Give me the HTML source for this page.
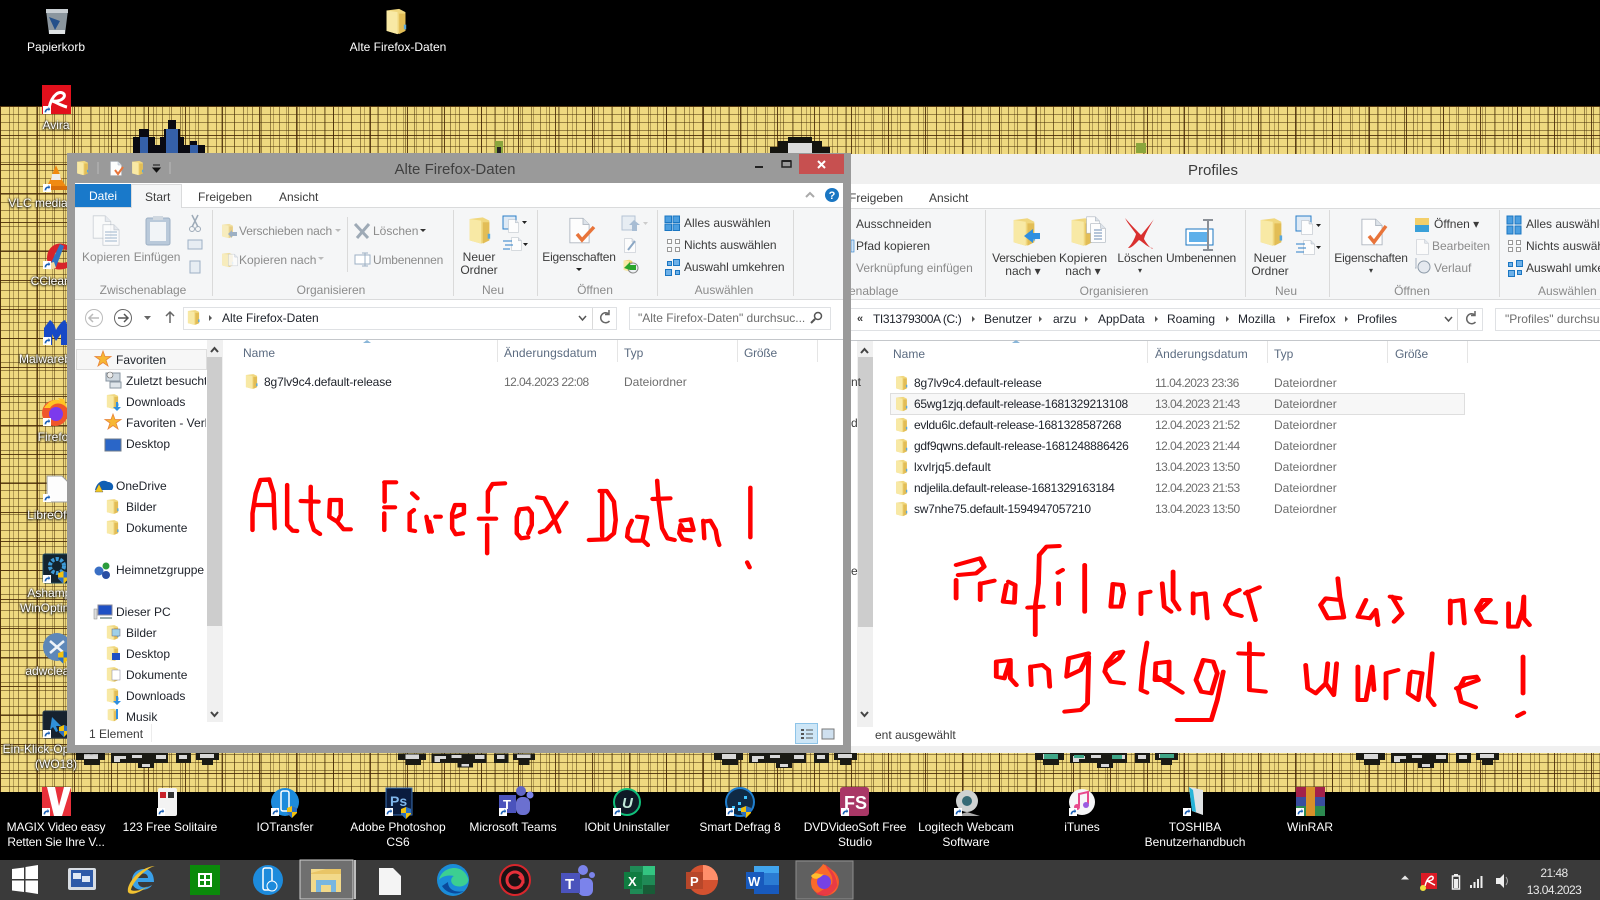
<!DOCTYPE html>
<html lang="de"><head><meta charset="utf-8"><title>Desktop</title>
<style>
html,body{margin:0;padding:0;background:#000}
#p{position:relative;width:1600px;height:900px;overflow:hidden;background:#000;font-family:"Liberation Sans",sans-serif;font-size:12px;color:#3b3b3b}
.a{position:absolute}
.t{position:absolute;white-space:nowrap;line-height:16px}
.c{transform:translateX(-50%)}
.w{color:#fff;text-shadow:0 1px 2px #000,0 0 2px #000}
.g{color:#8b8b8b}
.n{color:#20242c}
.h{color:#5b6b80}
.d{color:#6d6d6d}
.dg{letter-spacing:-.55px}
.fn{letter-spacing:-.27px}
.sn{letter-spacing:-.13px}
svg{position:absolute;left:0;top:0;overflow:visible}
#wall{left:0;top:106px;width:1600px;height:686px;background-color:#efd980;
background-image:linear-gradient(90deg,rgba(70,40,5,.85) 1px,transparent 1px),linear-gradient(rgba(70,40,5,.85) 1px,transparent 1px),linear-gradient(90deg,rgba(70,45,5,.5) 1px,transparent 1px),linear-gradient(rgba(70,45,5,.5) 1px,transparent 1px),linear-gradient(90deg,rgba(70,45,5,.35) 1px,transparent 1px);
background-size:37px 100%,100% 29px,9px 100%,100% 8px,13px 100%}
.ln{position:absolute;background:#dadada;width:1px}
.bd{position:absolute;box-sizing:border-box;border:2px solid #dfe1e4;background:#fff}
</style></head><body><div id="p">

<div class="a" id="wall"></div>

<svg width="1600" height="900" style="display:block">
<defs>
<symbol id="fold" viewBox="0 0 14 18"><path d="M1 2 9 1 13 3V15L8 17 1 15Z" fill="#f0d77e"/><path d="M1 2 8 3V17L1 15Z" fill="#f8e9a5"/><path d="M9 4 13 4V15L9 17Z" fill="#e2bd56"/><path d="M12 11h1.500v3H12z" fill="#5aa8dc"/></symbol>
<symbol id="page" viewBox="0 0 24 30"><path d="M1 1H16L23 8V29H1Z" fill="#fdfdfd" stroke="#aeb6c0"/><path d="M16 1V8H23" fill="#dde3ea" stroke="#aeb6c0"/></symbol>
<symbol id="spr" viewBox="0 0 148 15" shape-rendering="crispEdges">
<path d="M0 0H29V7H24V12H8V7H0ZM35 0H92V10H78V15H62V10H35ZM100 0H115V10H100ZM120 0H143V7H137V12H126V7H120Z" fill="#1a1a14"/>
<path d="M8 1H22V6H8ZM38 3H50V6H44V9H38ZM66 11H74V14H66ZM56 2H66V5H56ZM80 2H90V6H80ZM124 1H138V5H124ZM103 2H111V6H103Z" fill="#d8d8d8"/>
</symbol>
<symbol id="shield" viewBox="0 0 10 12"><path d="M5 0 10 2V7L5 12 0 7V2Z" fill="#f2c20f"/><path d="M5 0 10 2V6H5ZM0 6H5V12L0 7Z" fill="#2a6fc4"/></symbol>
<symbol id="arr" viewBox="0 0 10 10"><rect width="10" height="10" fill="#fff"/><path d="M2 8C2 5 4 3 7 3V1L9 4 7 6.500V5C5 5 4 6 4 8Z" fill="#1a5fb4"/></symbol>
</defs>

<!-- top-of-wallpaper sprites -->
<g shape-rendering="crispEdges">
<path d="M133 153V137H139V129H149V137H155V145H160V137H164V129H168V120H176V129H180V137H184V145H190V141H197V145H205V153Z" fill="#0a0a12"/>
<path d="M140 153V137H148V153ZM166 153V129H178V153ZM190 153V145H198V153Z" fill="#3560a8"/>
<path d="M495 153V141H503V153Z" fill="#8aa63c"/><rect x="497" y="147" width="4" height="6" fill="#222"/>
<path d="M770 153V147H778V141H788V137H812V141H822V147H830V153Z" fill="#14140f"/><path d="M788 143H812V153H788Z" fill="#dcdcdc"/>
<path d="M1136 153V143H1146V153Z" fill="#8aa63c"/>
</g>
<!-- bottom sprites -->
<use href="#spr" x="76" y="753" width="148" height="15"/>
<use href="#spr" x="398" y="753" width="142" height="15"/>
<use href="#spr" x="714" y="753" width="148" height="15"/>
<use href="#spr" x="1035" y="753" width="148" height="15"/><path d="M1044 754H1058V759H1044ZM1074 755H1084V758H1074ZM1112 755H1122V759H1112ZM1160 754H1174V758H1160Z" fill="#3fa688"/>
<use href="#spr" x="1356" y="753" width="148" height="15"/>

<!-- desktop icons left -->
<path d="M46 10H68L65 34H49Z" fill="#8b969e"/><path d="M46 9H68V13H46Z" fill="#c8ced2"/><path d="M49 17 60 21 55 30Z" fill="#24508a"/><path d="M49 30H65V34H49Z" fill="#dfe3e5"/>
<use href="#fold" x="385" y="7" width="22" height="29"/>
<rect x="42" y="85" width="29" height="29" fill="#e2101c"/><path d="M49 108C52 94 60 90 64 94 66 98 60 102 52 101 58 103 62 106 67 107" fill="none" stroke="#fff" stroke-width="3"/><use href="#arr" x="43" y="106" width="8" height="8"/>
<path d="M56 165 62 180 67 188H46L50 180Z" fill="#f08a12"/><path d="M52 174H60L61 180H51Z" fill="#eee"/><path d="M46 186H67V190H46Z" fill="#d96f0a"/><use href="#arr" x="43" y="184" width="8" height="8"/>
<path d="M67 245C56 240 47 248 47 258 47 268 58 272 67 268V262C60 264 54 262 54 257 54 252 60 248 67 250Z" fill="#d8232a"/><path d="M50 265 60 244 64 246 56 267Z" fill="#2f72c4"/><path d="M46 264 54 262 56 268 49 270Z" fill="#f0d9a0"/><use href="#arr" x="43" y="261" width="8" height="8"/>
<path d="M44 345V328L50 320C53 322 55 326 56 330 58 326 62 321 65 320L68 326V345H61V334L56 341 52 334V345Z" fill="#1749c6"/><use href="#arr" x="43" y="337" width="8" height="8"/>
<circle cx="55" cy="413" r="13" fill="#f0562a"/><circle cx="56" cy="414" r="7" fill="#7c3aed"/><path d="M44 408C50 398 62 396 67 408 62 402 54 402 50 408Z" fill="#ffc424"/><path d="M58 398 64 399 67 408Z" fill="#ffc424"/><use href="#arr" x="43" y="418" width="8" height="8"/>
<path d="M47 476H62L68 482V502H47Z" fill="#fdfdfd" stroke="#9a9a9a"/><use href="#arr" x="43" y="494" width="8" height="8"/>
<rect x="43" y="554" width="26" height="29" rx="2" fill="#13242f" stroke="#1f4a60"/><circle cx="57" cy="566" r="7" fill="none" stroke="#3d9ad6" stroke-width="4" stroke-dasharray="3 1.500"/><use href="#shield" x="58" y="571" width="11" height="13"/><use href="#arr" x="43" y="575" width="8" height="8"/>
<circle cx="57" cy="647" r="14" fill="#5d87b8"/><path d="M50 641 64 653M64 641 50 653" stroke="#eef3f8" stroke-width="2.500"/><use href="#shield" x="58" y="651" width="11" height="13"/>
<rect x="43" y="711" width="26" height="27" rx="2" fill="#17222e" stroke="#26384a"/><path d="M52 717 61 726 56 726 58 731 56 732 53 727 50 730Z" fill="#2f8fd8"/><use href="#shield" x="59" y="725" width="10" height="12"/><use href="#arr" x="43" y="730" width="8" height="8"/>

<!-- bottom desktop row -->
<rect x="42" y="787" width="29" height="29" fill="#e8303a"/><path d="M47 787H55L59 806 64 787H71L62 816H54Z" fill="#fff"/><use href="#arr" x="42" y="808" width="8" height="8"/>
<rect x="158" y="788" width="19" height="28" rx="2" fill="#f3f3f3"/><path d="M160 792h6v6h-6z" fill="#c8222a"/><path d="M168 792h6v6h-6z" fill="#333"/><use href="#arr" x="157" y="808" width="8" height="8"/>
<circle cx="285" cy="802" r="14" fill="#1d8bdc"/><rect x="281" y="791" width="8" height="20" rx="2" fill="none" stroke="#fff" stroke-width="1.500"/><use href="#shield" x="287" y="806" width="10" height="12"/><use href="#arr" x="271" y="808" width="8" height="8"/>
<rect x="386" y="788" width="26" height="27" fill="#0a1c3e" stroke="#3b70b4"/><text x="390" y="806" font-size="14" font-weight="bold" fill="#7fb6ea" font-family="Liberation Sans, sans-serif">Ps</text><use href="#shield" x="401" y="807" width="10" height="12"/><use href="#arr" x="385" y="808" width="8" height="8"/>
<circle cx="521" cy="791" r="5" fill="#6266c4"/><circle cx="530" cy="795" r="3.500" fill="#7b83eb"/><rect x="516" y="797" width="14" height="18" rx="6" fill="#6b70d0"/><rect x="499" y="795" width="17" height="18" fill="#4b53bc"/><text x="503" y="809" font-size="13" font-weight="bold" fill="#fff" font-family="Liberation Sans, sans-serif">T</text><use href="#arr" x="499" y="808" width="8" height="8"/>
<circle cx="627" cy="802" r="13" fill="#0e1a26" stroke="#10c07a" stroke-width="2"/><text x="622" y="808" font-size="15" font-style="italic" font-weight="bold" fill="#bfe8d8" font-family="Liberation Sans, sans-serif">U</text><use href="#arr" x="613" y="808" width="8" height="8"/>
<circle cx="740" cy="802" r="14" fill="#0f2a45" stroke="#1f7fd0" stroke-width="2"/><path d="M732 806h3v3h-3zM738 802h3v3h-3zM744 796h3v3h-3zM738 808h3v3h-3z" fill="#3ec3ff"/><use href="#shield" x="741" y="806" width="10" height="12"/><use href="#arr" x="726" y="808" width="8" height="8"/>
<rect x="840" y="787" width="29" height="29" rx="3" fill="#a93766"/><text x="844" y="809" font-size="18" font-weight="bold" fill="#fff" font-family="Liberation Sans, sans-serif">FS</text><use href="#arr" x="841" y="808" width="8" height="8"/>
<circle cx="967" cy="801" r="11" fill="#cfd2d2"/><circle cx="967" cy="801" r="5" fill="#366a76"/><path d="M955 816 967 812 980 816Z" fill="#aaa"/><use href="#arr" x="954" y="808" width="8" height="8"/>
<circle cx="1082" cy="802" r="13" fill="#f6f6f8"/><path d="M1079 806V794L1088 792V804" fill="none" stroke="#e84a8c" stroke-width="2"/><circle cx="1077" cy="807" r="3" fill="#e84a8c"/><circle cx="1086" cy="805" r="3" fill="#9b5be0"/><use href="#arr" x="1069" y="808" width="8" height="8"/>
<path d="M1189 787 1203 790V815L1192 811Z" fill="#dfe3e5"/><path d="M1189 787 1193 790 1196 812 1192 811Z" fill="#27b4d8"/><use href="#arr" x="1183" y="808" width="8" height="8"/>
<rect x="1296" y="787" width="29" height="10" fill="#a3214a"/><rect x="1296" y="797" width="29" height="9" fill="#3a4ea0"/><rect x="1296" y="806" width="29" height="10" fill="#2c8a50"/><rect x="1306" y="787" width="9" height="29" fill="#d8902a"/><use href="#arr" x="1296" y="808" width="8" height="8"/>

<!-- taskbar -->
<rect x="0" y="860" width="1600" height="40" fill="#3a3a3a"/>
<path d="M12 869 24 867.500V879H12ZM25.500 867 38 865V879H25.500ZM12 880.500H24V892L12 890.500ZM25.500 880.500H38V894L25.500 892Z" fill="#fff"/>
<rect x="68" y="868" width="28" height="22" rx="2" fill="#d8dde3"/><rect x="71" y="870" width="22" height="17" fill="#2e5aa8"/><path d="M73 873h8v6h-8zM82 876h8v6h-8z" fill="#dfe8f5"/>
<path d="M132 881C132 872 139 869 144 869 151 869 154 875 154 882H138C138 888 146 889 152 885 148 892 132 892 132 881ZM138 878H148C148 872 139 872 138 878Z" fill="#3aa0e8"/><path d="M128 892C126 884 140 866 156 866 148 866 132 882 131 890 135 892 142 890 148 886 140 893 130 896 128 892Z" fill="#f2c230"/>
<rect x="190" y="865" width="30" height="30" fill="#0a8a0a"/><path d="M198 873H212V887H198Z" fill="#fff"/><path d="M200 875h4v4h-4zM206 875h4v4h-4zM200 881h4v4h-4zM206 881h4v4h-4z" fill="#0a8a0a"/>
<circle cx="268" cy="880" r="15" fill="#1d8bdc"/><rect x="263" y="868" width="9" height="22" rx="2" fill="none" stroke="#fff" stroke-width="1.500"/><circle cx="272" cy="886" r="5" fill="#1d8bdc" stroke="#fff"/>
<rect x="300" y="860" width="53" height="39" fill="#6f6f6f" stroke="#d0d0d0"/><rect x="354" y="860" width="2" height="39" fill="#bdbdbd"/>
<path d="M311 869 H341V892H311Z" fill="#f2d98a"/><path d="M311 873 326 869H341V874H311Z" fill="#e9c566"/><path d="M316 880H336V892H331V885H321V892H316Z" fill="#79b6e0"/>
<path d="M379 868H393L401 876V895H379Z" fill="#f4f4f4"/>
<circle cx="453" cy="880" r="16" fill="#1b8cd8"/><path d="M439 880C441 867 462 862 468 878 470 884 462 888 456 886 450 884 450 878 454 876 446 874 440 878 439 880Z" fill="#3ccf91"/><path d="M442 886C446 893 456 896 464 891 456 893 448 890 448 882Z" fill="#0a4a9c"/>
<circle cx="515" cy="880" r="15" fill="#1a1214" stroke="#d8262c" stroke-width="2"/><path d="M507 880A8 8 0 0 1 523 880L519 876M523 880A8 8 0 0 1 507 880" fill="none" stroke="#e5303a" stroke-width="3"/>
<circle cx="583" cy="870" r="5" fill="#7b83eb"/><circle cx="592" cy="875" r="3" fill="#7b83eb"/><rect x="578" y="878" width="15" height="18" rx="6" fill="#7b83eb"/><rect x="561" y="873" width="19" height="20" fill="#4b53bc"/><text x="565" y="889" font-size="15" font-weight="bold" fill="#fff" font-family="Liberation Sans, sans-serif">T</text>
<rect x="630" y="866" width="25" height="28" fill="#1f8a56"/><rect x="643" y="866" width="12" height="9" fill="#33c481"/><rect x="643" y="885" width="12" height="9" fill="#185c37"/><rect x="624" y="872" width="18" height="17" fill="#107c41"/><text x="628" y="886" font-size="13" font-weight="bold" fill="#fff" font-family="Liberation Sans, sans-serif">X</text>
<circle cx="703" cy="880" r="15" fill="#d35230"/><path d="M703 865A15 15 0 0 1 718 880H703Z" fill="#ff8f6b"/><rect x="686" y="872" width="17" height="17" fill="#b7472a"/><text x="690" y="886" font-size="13" font-weight="bold" fill="#fff" font-family="Liberation Sans, sans-serif">P</text>
<rect x="754" y="866" width="25" height="28" fill="#2b7cd3"/><rect x="754" y="866" width="25" height="7" fill="#41a5ee"/><rect x="754" y="885" width="25" height="9" fill="#185abd"/><rect x="746" y="872" width="18" height="17" fill="#185abd"/><text x="748" y="886" font-size="13" font-weight="bold" fill="#fff" font-family="Liberation Sans, sans-serif">W</text>
<rect x="796" y="861" width="57" height="38" fill="#606060" stroke="#8e8e8e"/>
<circle cx="825" cy="882" r="14" fill="#f2522a"/><path d="M812 888C808 874 820 870 823 864 836 870 840 880 836 890 832 896 818 896 812 888Z" fill="#f96a2a"/><path d="M816 894C824 898 834 894 837 886 838 876 830 868 825 864 828 872 834 874 832 884Z" fill="#e22850" opacity=".7"/><circle cx="824" cy="882" r="7" fill="#7542e5"/><path d="M811 876C816 870 820 876 824 874 818 880 814 880 811 876Z" fill="#ffbd2e"/>
<path d="M1401 879.500 1405 875.500 1409 879.500Z" fill="#e8e8e8"/>
<rect x="1421" y="873" width="16" height="16" fill="#dc1a25"/><path d="M1425 886C1427 878 1431 875 1433 877 1434 880 1430 881 1427 881 1430 882 1432 884 1435 885" fill="none" stroke="#fff" stroke-width="1.500"/><circle cx="1423" cy="888" r="3" fill="#f0e040"/>
<rect x="1452.500" y="876" width="7" height="13" fill="none" stroke="#eee" stroke-width="1.500"/><rect x="1454" y="874" width="4" height="2" fill="#eee"/><rect x="1454" y="879" width="4" height="9" fill="#eee"/>
<path d="M1470 885h2v3h-2zM1473.500 882h2v6h-2zM1477 879h2v9h-2zM1480.500 876h2v12h-2z" fill="#eee"/>
<path d="M1496 878H1500L1504 874V888L1500 884H1496Z" fill="#eee"/><path d="M1506 877C1508 880 1508 882 1506 885" fill="none" stroke="#aaa"/>
</svg>

<!-- desktop labels -->
<div class="t w c" style="left:56px;top:39px">Papierkorb</div>
<div class="t w c" style="left:398px;top:39px">Alte Firefox-Daten</div>
<div class="t w c" style="left:56px;top:117px">Avira</div>
<div class="t w c" style="left:56px;top:195px">VLC media player</div>
<div class="t w c" style="left:56px;top:273px">CCleaner</div>
<div class="t w c" style="left:56px;top:351px">Malwarebytes</div>
<div class="t w c" style="left:56px;top:429px">Firefox</div>
<div class="t w c" style="left:56px;top:507px">LibreOffice</div>
<div class="t w c" style="left:56px;top:585px">Ashampoo</div>
<div class="t w c" style="left:56px;top:600px">WinOptimizer</div>
<div class="t w c" style="left:56px;top:663px">adwcleaner</div>
<div class="t w c" style="left:56px;top:741px">Ein-Klick-Optimierer</div>
<div class="t w c" style="left:56px;top:756px">(WO18)</div>

<div class="t w c" style="left:56px;top:819px;letter-spacing:-.15px">MAGIX Video easy</div>
<div class="t w c" style="left:56px;top:834px;letter-spacing:-.15px">Retten Sie Ihre V...</div>
<div class="t w c" style="left:170px;top:819px">123 Free Solitaire</div>
<div class="t w c" style="left:285px;top:819px">IOTransfer</div>
<div class="t w c" style="left:398px;top:819px">Adobe Photoshop</div>
<div class="t w c" style="left:398px;top:834px">CS6</div>
<div class="t w c" style="left:513px;top:819px">Microsoft Teams</div>
<div class="t w c" style="left:627px;top:819px">IObit Uninstaller</div>
<div class="t w c" style="left:740px;top:819px">Smart Defrag 8</div>
<div class="t w c" style="left:855px;top:819px;letter-spacing:-.15px">DVDVideoSoft Free</div>
<div class="t w c" style="left:855px;top:834px">Studio</div>
<div class="t w c" style="left:966px;top:819px">Logitech Webcam</div>
<div class="t w c" style="left:966px;top:834px">Software</div>
<div class="t w c" style="left:1082px;top:819px">iTunes</div>
<div class="t w c" style="left:1195px;top:819px">TOSHIBA</div>
<div class="t w c" style="left:1195px;top:834px">Benutzerhandbuch</div>
<div class="t w c" style="left:1310px;top:819px">WinRAR</div>
<div class="t c dg" style="left:1554px;top:865px;color:#e8e8e8">21:48</div>
<div class="t c dg" style="left:1554px;top:882px;color:#e8e8e8">13.04.2023</div>

<!-- RIGHT WINDOW -->
<div class="a" style="left:845px;top:154px;width:755px;height:599px;background:#f0f0f0"></div>
<div class="a" style="left:845px;top:184px;width:755px;height:562px;background:#fff"></div>
<div class="a" style="left:845px;top:208px;width:755px;height:92px;background:#f5f6f7;border-top:1px solid #dadbdc;border-bottom:1px solid #dadbdc;box-sizing:border-box"></div>
<div class="t c" style="left:1213px;top:162px;font-size:15px;color:#3c3c3c;line-height:18px">Profiles</div>
<div class="t" style="left:849px;top:190px">Freigeben</div>
<div class="t" style="left:929px;top:190px">Ansicht</div>
<div class="ln" style="left:985px;top:210px;height:87px"></div>
<div class="ln" style="left:1245px;top:210px;height:87px"></div>
<div class="ln" style="left:1329px;top:210px;height:87px"></div>
<div class="ln" style="left:1499px;top:210px;height:87px"></div>
<div class="t" style="left:856px;top:216px">Ausschneiden</div>
<div class="t" style="left:856px;top:238px">Pfad kopieren</div>
<div class="t g" style="left:856px;top:260px">Verknüpfung einfügen</div>
<div class="t g" style="left:849px;top:283px">enablage</div>
<div class="t c" style="left:1024px;top:250px;letter-spacing:-.2px">Verschieben</div>
<div class="t c" style="left:1023px;top:263px">nach ▾</div>
<div class="t c" style="left:1083px;top:250px">Kopieren</div>
<div class="t c" style="left:1083px;top:263px">nach ▾</div>
<div class="t c" style="left:1140px;top:250px">Löschen</div>
<div class="t c" style="left:1140px;top:263px;font-size:8px">▾</div>
<div class="t c" style="left:1201px;top:250px;letter-spacing:-.2px">Umbenennen</div>
<div class="t c" style="left:1270px;top:250px">Neuer</div>
<div class="t c" style="left:1270px;top:263px">Ordner</div>
<div class="t c" style="left:1371px;top:250px;letter-spacing:-.2px">Eigenschaften</div>
<div class="t c" style="left:1371px;top:263px;font-size:8px">▾</div>
<div class="t" style="left:1434px;top:216px">Öffnen ▾</div>
<div class="t g" style="left:1432px;top:238px">Bearbeiten</div>
<div class="t g" style="left:1434px;top:260px">Verlauf</div>
<div class="t" style="left:1526px;top:216px">Alles auswählen</div>
<div class="t" style="left:1526px;top:238px">Nichts auswählen</div>
<div class="t" style="left:1526px;top:260px">Auswahl umkehren</div>
<div class="t g c" style="left:1114px;top:283px">Organisieren</div>
<div class="t g c" style="left:1286px;top:283px">Neu</div>
<div class="t g c" style="left:1412px;top:283px">Öffnen</div>
<div class="t g" style="left:1538px;top:283px">Auswählen</div>

<svg width="1600" height="900" style="pointer-events:none">
<use href="#fold" x="1012" y="216" width="24" height="32"/><path d="M1024 236 1033 229V233H1040V239H1033V243Z" fill="#2f8fe0"/>
<use href="#fold" x="1070" y="216" width="24" height="32"/><use href="#page" x="1086" y="215" width="14" height="20"/><use href="#page" x="1090" y="222" width="16" height="22"/><path d="M1094 230h8M1094 233h8M1094 236h8M1094 239h8" stroke="#6d8db5"/>
<path d="M1125 218C1132 226 1138 232 1141 235 1147 228 1152 222 1154 219 1150 226 1145 234 1144 239 1148 246 1152 250 1153 248 1148 248 1143 242 1139 240 1135 244 1132 248 1128 248 1132 244 1135 238 1136 234 1132 228 1128 224 1125 218Z" fill="#d9302f"/>
<rect x="1186" y="229" width="27" height="16" fill="#fff" stroke="#1a76c2"/><rect x="1189" y="232" width="20" height="10" fill="#5fb0ea"/><path d="M1203 220H1213M1208 220V250M1203 250H1213" stroke="#8a8f96" stroke-width="2" fill="none"/>
<use href="#fold" x="1259" y="216" width="24" height="32"/>
<rect x="1296" y="216" width="15" height="15" fill="#dfeaf5" stroke="#2a7fc8"/><use href="#page" x="1301" y="220" width="12" height="15"/><path d="M1316 224h5l-2.500 3z" fill="#222"/>
<use href="#page" x="1303" y="240" width="12" height="15"/><path d="M1296 244h9M1298 248h8M1296 252h8" stroke="#2a7fc8"/><path d="M1316 246h5l-2.500 3z" fill="#222"/>
<use href="#page" x="1361" y="218" width="22" height="28"/><path d="M1369 236 1374 242 1386 226" fill="none" stroke="#e8743a" stroke-width="3.500"/>
<rect x="1415" y="218" width="14" height="14" fill="#f3cf6a"/><rect x="1415" y="225" width="14" height="7" fill="#3aa0d8"/>
<use href="#page" x="1416" y="239" width="13" height="16" opacity=".8"/>
<circle cx="1424" cy="267" r="6" fill="#e5e9ef" stroke="#8d9aa8"/><path d="M1416 258v10l-1 0" stroke="#a8b3c0" fill="none"/>
<path d="M1507 216h6v8h-6zM1515 216h6v8h-6zM1507 226h6v8h-6zM1515 226h6v8h-6z" fill="#4b9ee0" stroke="#1a76c2"/>
<path d="M1508.500 240.500h4v4h-4zM1516.500 240.500h4v4h-4zM1508.500 247.500h4v4h-4zM1516.500 247.500h4v4h-4z" fill="#fff" stroke="#999"/>
<path d="M1508.500 262.500h4v4h-4zM1508.500 270.500h6v6h-6zM1516.500 260.500h6v6h-6zM1517.500 270.500h4v4h-4z" fill="#6db0e8" stroke="#1a76c2"/>
<rect x="851" y="240" width="3" height="12" fill="#cfe2f5" stroke="#2a7fc8" stroke-width=".6"/>
</svg>

<div class="bd" style="left:851px;top:308px;width:632px;height:23px;border-width:1px;border-left:0"></div>
<div class="ln" style="left:1457px;top:309px;height:21px"></div>
<div class="t" style="left:857px;top:311px;font-weight:bold;font-size:11px">«</div>
<div class="t n" style="left:873px;top:311px;letter-spacing:-.4px">TI31379300A (C:)</div>
<div class="t n" style="left:984px;top:311px">Benutzer</div>
<div class="t n" style="left:1053px;top:311px">arzu</div>
<div class="t n" style="left:1098px;top:311px">AppData</div>
<div class="t n" style="left:1167px;top:311px">Roaming</div>
<div class="t n" style="left:1238px;top:311px">Mozilla</div>
<div class="t n" style="left:1299px;top:311px">Firefox</div>
<div class="t n" style="left:1357px;top:311px">Profiles</div>
<svg width="1600" height="900">
<path d="M972 316v6l3-3zM1039 316v6l3-3zM1085 316v6l3-3zM1155 316v6l3-3zM1226 316v6l3-3zM1287 316v6l3-3zM1345 316v6l3-3z" fill="#555"/>
<path d="M1445 317l3.500 4 3.500-4" fill="none" stroke="#555" stroke-width="1.500"/>
<path d="M1475 315A5 5 0 1 0 1475.500 322M1475 311v4.500h-4" fill="none" stroke="#666" stroke-width="1.500"/>
</svg>
<div class="bd" style="left:1495px;top:308px;width:120px;height:23px;border-width:1px"></div>
<div class="t d" style="left:1505px;top:311px">"Profiles" durchsu</div>

<div class="a" style="left:851px;top:340px;width:749px;height:1px;background:#c4c7cb"></div>
<div class="a" style="left:857px;top:341px;width:16px;height:386px;background:#f0f0f0"></div>
<div class="a" style="left:858px;top:357px;width:15px;height:270px;background:#cdcdcd"></div>
<svg width="1600" height="900">
<path d="M861 353l3.500-4 3.500 4M861 712l3.500 4 3.500-4" fill="none" stroke="#444" stroke-width="2"/>
<path d="M1012 343l4-3 4 3z" fill="#8ab6d8"/>
<use href="#fold" x="895" y="375" width="13" height="16"/><use href="#fold" x="895" y="417" width="13" height="16"/><use href="#fold" x="895" y="438" width="13" height="16"/><use href="#fold" x="895" y="459" width="13" height="16"/><use href="#fold" x="895" y="480" width="13" height="16"/><use href="#fold" x="895" y="501" width="13" height="16"/>
</svg>
<div class="ln" style="left:1147px;top:341px;height:22px;background:#e5e5e5"></div>
<div class="ln" style="left:1267px;top:341px;height:22px;background:#e5e5e5"></div>
<div class="ln" style="left:1387px;top:341px;height:22px;background:#e5e5e5"></div>
<div class="ln" style="left:1467px;top:341px;height:22px;background:#e5e5e5"></div>
<div class="t h" style="left:893px;top:346px">Name</div>
<div class="t h" style="left:1155px;top:346px;letter-spacing:.1px">Änderungsdatum</div>
<div class="t h" style="left:1274px;top:346px">Typ</div>
<div class="t h" style="left:1395px;top:346px;letter-spacing:-.2px">Größe</div>
<div class="a" style="left:890px;top:393px;width:573px;height:20px;background:#f7f7f7;border:1px solid #dedede"></div>
<svg width="1600" height="900"><use href="#fold" x="895" y="396" width="13" height="16"/></svg>
<div class="t n sn" style="left:914px;top:375px">8g7lv9c4.default-release</div>
<div class="t n fn" style="left:914px;top:396px">65wg1zjq.default-release-1681329213108</div>
<div class="t n fn" style="left:914px;top:417px">evldu6lc.default-release-1681328587268</div>
<div class="t n fn" style="left:914px;top:438px">gdf9qwns.default-release-1681248886426</div>
<div class="t n" style="left:914px;top:459px">lxvlrjq5.default</div>
<div class="t n fn" style="left:914px;top:480px">ndjelila.default-release-1681329163184</div>
<div class="t n fn" style="left:914px;top:501px">sw7nhe75.default-1594947057210</div>
<div class="t d dg" style="left:1155px;top:375px">11.04.2023 23:36</div>
<div class="t d dg" style="left:1155px;top:396px">13.04.2023 21:43</div>
<div class="t d dg" style="left:1155px;top:417px">12.04.2023 21:52</div>
<div class="t d dg" style="left:1155px;top:438px">12.04.2023 21:44</div>
<div class="t d dg" style="left:1155px;top:459px">13.04.2023 13:50</div>
<div class="t d dg" style="left:1155px;top:480px">12.04.2023 21:53</div>
<div class="t d dg" style="left:1155px;top:501px">13.04.2023 13:50</div>
<div class="t d" style="left:1274px;top:375px">Dateiordner</div>
<div class="t d" style="left:1274px;top:396px">Dateiordner</div>
<div class="t d" style="left:1274px;top:417px">Dateiordner</div>
<div class="t d" style="left:1274px;top:438px">Dateiordner</div>
<div class="t d" style="left:1274px;top:459px">Dateiordner</div>
<div class="t d" style="left:1274px;top:480px">Dateiordner</div>
<div class="t d" style="left:1274px;top:501px">Dateiordner</div>
<div class="t" style="left:851px;top:374px">nt</div>
<div class="t" style="left:851px;top:415px">d</div>
<div class="t" style="left:851px;top:563px">e</div>
<div class="t" style="left:875px;top:727px">ent ausgewählt</div>

<svg style="left:930px;top:530px" width="630" height="200" viewBox="0 0 1568 600" preserveAspectRatio="none" fill="none" stroke="#f00" stroke-width="12" stroke-linejoin="round" stroke-linecap="round">
<path d="M65 105 125 85 135 110 115 130 70 135M65 150V205M125 160V210M130 160 160 152M190 165 182 215 210 218 212 165 195 155M322 48 290 50 272 75 270 160 262 230V315M243 233 282 230M318 128 330 120M320 160V222M385 105V245M455 165 450 230H475L482 190 478 165 455 162M525 190V252M525 190 548 185M578 160 583 230 600 245M605 125V210L620 238M655 190V250M655 195 685 190 690 265M745 195 735 225 750 250 775 258M745 195 770 180M790 185 810 270M785 190 820 172"/>
<path d="M1015 145 1020 200 1030 262 990 265 972 225 985 205 1020 210M1085 210 1065 260 1095 265 1110 240 1115 285M1145 200 1170 205M1150 200 1175 250 1155 275M1295 212V280M1295 215 1325 210 1330 280M1370 240 1395 210H1375L1360 240 1375 275 1408 278M1440 220V290H1462L1475 240 1478 200V265L1492 285"/>
<path d="M165 395 200 390 185 445 165 440ZM200 395V445L215 465M250 410 252 465M252 410 280 405 295 420 298 470M345 385 395 370 375 420 340 440ZM395 380 392 520 375 540 335 545M440 410 470 385 480 365 460 370 440 400 435 425 450 455 482 460M540 338 530 410 525 480 540 488M562 400 595 395V450H560ZM565 440 628 488M680 390 705 395 715 430 700 490 675 485 662 450ZM730 425 715 510 700 570H615M795 340V480L835 485M768 370 828 373"/>
<path d="M935 405 940 475 960 490 985 460 990 400M985 460 1005 495 1012 400M1065 410V510H1085L1100 410 1105 480M1135 430V505M1135 430 1165 420M1195 430 1190 490 1215 510 1225 430 1200 425M1250 370 1240 500 1255 525M1310 475 1365 450 1360 440 1330 445 1315 480 1322 515 1358 532M1476 380V490M1462 558 1478 548"/>
</svg>

<!-- LEFT WINDOW -->
<div class="a" style="left:67px;top:153px;width:784px;height:600px;background:#9a9a9a"></div>
<div class="a" style="left:75px;top:183px;width:768px;height:562px;background:#fff"></div>
<div class="a" style="left:75px;top:207px;width:768px;height:93px;background:#f5f6f7;border-top:1px solid #dadbdc;border-bottom:1px solid #dadbdc;box-sizing:border-box"></div>
<div class="a" style="left:75px;top:184px;width:56px;height:23px;background:#1979ca"></div>
<div class="a" style="left:131px;top:184px;width:51px;height:24px;background:#f5f6f7;border:1px solid #dadbdc;border-bottom:0;box-sizing:border-box"></div>
<div class="t" style="left:89px;top:188px;color:#fff">Datei</div>
<div class="t" style="left:145px;top:189px">Start</div>
<div class="t" style="left:198px;top:189px">Freigeben</div>
<div class="t" style="left:279px;top:189px">Ansicht</div>
<div class="a" style="left:799px;top:154px;width:45px;height:20px;background:#c75050"></div>
<div class="t c" style="left:455px;top:161px;font-size:15px;line-height:18px;color:#404040">Alte Firefox-Daten</div>

<div class="ln" style="left:212px;top:210px;height:86px"></div>
<div class="ln" style="left:347px;top:217px;height:55px"></div>
<div class="ln" style="left:453px;top:210px;height:86px"></div>
<div class="ln" style="left:537px;top:210px;height:86px"></div>
<div class="ln" style="left:657px;top:210px;height:86px"></div>
<div class="ln" style="left:793px;top:210px;height:86px"></div>

<div class="t g c" style="left:106px;top:249px">Kopieren</div>
<div class="t g c" style="left:157px;top:249px;letter-spacing:-.1px">Einfügen</div>
<div class="t g c" style="left:143px;top:282px">Zwischenablage</div>
<div class="t g" style="left:239px;top:223px;letter-spacing:-.15px">Verschieben nach</div>
<div class="t g" style="left:239px;top:252px">Kopieren nach</div>
<div class="t g" style="left:373px;top:223px">Löschen</div>
<div class="t g" style="left:373px;top:252px;letter-spacing:-.2px">Umbenennen</div>
<div class="t g c" style="left:331px;top:282px">Organisieren</div>
<div class="t c" style="left:479px;top:249px">Neuer</div>
<div class="t c" style="left:479px;top:262px">Ordner</div>
<div class="t g c" style="left:493px;top:282px">Neu</div>
<div class="t c" style="left:579px;top:249px;letter-spacing:-.2px">Eigenschaften</div>
<div class="t g c" style="left:595px;top:282px">Öffnen</div>
<div class="t" style="left:684px;top:215px">Alles auswählen</div>
<div class="t" style="left:684px;top:237px;letter-spacing:-.1px">Nichts auswählen</div>
<div class="t" style="left:684px;top:259px;letter-spacing:-.1px">Auswahl umkehren</div>
<div class="t g c" style="left:724px;top:282px">Auswählen</div>

<svg width="1600" height="900">
<!-- qat -->
<use href="#fold" x="76" y="160" width="13" height="16"/><path d="M98 162v12M170 162v12" stroke="#bbb"/>
<use href="#page" x="110" y="161" width="12" height="15"/><path d="M115 170 118 174 123 167" fill="none" stroke="#e8743a" stroke-width="2"/>
<use href="#fold" x="131" y="160" width="13" height="16"/><path d="M153 165h7M153 168h7l-3.500 4z" stroke="#111" fill="#111"/>
<!-- caption -->
<rect x="755" y="166" width="8" height="2" fill="#222"/><rect x="782" y="161" width="9" height="6" fill="none" stroke="#222" stroke-width="1.500"/><path d="M782 161h9" stroke="#222" stroke-width="2"/>
<path d="M818 161 825 168M825 161 818 168" stroke="#fff" stroke-width="2"/>
<path d="M806 197 810 193 814 197" fill="none" stroke="#aaa" stroke-width="2"/>
<circle cx="832" cy="195" r="7" fill="#1a76c2"/><text x="832" y="199" font-size="11" font-weight="bold" fill="#fff" text-anchor="middle" font-family="Liberation Sans, sans-serif">?</text>
<!-- ribbon icons -->
<use href="#page" x="92" y="215" width="20" height="24" opacity=".6"/><use href="#page" x="102" y="224" width="18" height="22" opacity=".7"/><path d="M105 232h12M105 235h12M105 238h12M105 241h12" stroke="#9fb5cc"/>
<rect x="146" y="218" width="24" height="27" rx="2" fill="#b9c9da" stroke="#9db0c4"/><rect x="150" y="222" width="16" height="19" fill="#f1f4f7"/><rect x="153" y="216" width="10" height="4" fill="#d0d8e0"/>
<path d="M192 215 198 227M198 215 192 227" stroke="#9daab8" stroke-width="1.500"/><circle cx="192" cy="229" r="2.500" fill="none" stroke="#9daab8"/><circle cx="198" cy="229" r="2.500" fill="none" stroke="#9daab8"/>
<rect x="188" y="240" width="14" height="9" fill="#e7edf3" stroke="#9db0c4"/>
<rect x="190" y="261" width="10" height="12" fill="#e7edf3" stroke="#9db0c4"/>
<use href="#fold" x="221" y="223" width="13" height="16" opacity=".7"/><path d="M228 234 232 230V232H237V236H232V238Z" fill="#9db0c4"/>
<path d="M335 229h6l-3 3z" fill="#bbb"/><path d="M318 257h6l-3 3z" fill="#bbb"/>
<use href="#fold" x="221" y="252" width="13" height="16" opacity=".7"/><use href="#page" x="228" y="253" width="10" height="14" opacity=".8"/>
<path d="M355 224 368 238M369 224 357 238" stroke="#9eaab6" stroke-width="3"/>
<path d="M420 229h6l-3 3z" fill="#333"/>
<rect x="355" y="255" width="15" height="9" fill="#fff" stroke="#9db0c4"/><path d="M365 253v13M362 253h6M362 266h6" stroke="#9db0c4" fill="none"/>
<use href="#fold" x="468" y="215" width="23" height="31"/>
<rect x="503" y="216" width="13" height="13" fill="#dfeaf5" stroke="#2a7fc8"/><use href="#page" x="508" y="219" width="11" height="14"/><path d="M522 221h5l-2.500 3z" fill="#222"/>
<use href="#page" x="511" y="237" width="11" height="14"/><path d="M503 241h9M505 245h8M503 249h7" stroke="#2a7fc8"/><path d="M523 243h5l-2.500 3z" fill="#222"/>
<use href="#page" x="569" y="217" width="21" height="27"/><path d="M577 234 582 240 594 227" fill="none" stroke="#e8743a" stroke-width="3.500"/>
<path d="M576 268h6l-3 3z" fill="#222"/>
<rect x="622" y="216" width="13" height="14" fill="#e7edf3" stroke="#b5c4d4"/><path d="M632 231V225H629L634 220 640 225H637V231Z" fill="#a8bdd4"/><path d="M643 222h5l-2.500 3z" fill="#ccc"/>
<use href="#page" x="624" y="238" width="12" height="15" opacity=".9"/><path d="M628 250 635 241" stroke="#8ba7c4" stroke-width="2"/>
<use href="#fold" x="622" y="259" width="12" height="13"/><circle cx="633" cy="268" r="5" fill="#eef1f4" stroke="#888"/><path d="M624 268 630 262V265H636V270H630" fill="#2aa52a"/>
<path d="M665 216h6.500v6.500h-6.500zM673 216h6.500v6.500h-6.500zM665 224h6.500v6.500h-6.500zM673 224h6.500v6.500h-6.500z" fill="#4b9ee0" stroke="#1a76c2"/>
<path d="M667.500 239.500h4v4h-4zM675.500 239.500h4v4h-4zM667.500 247.500h4v4h-4zM675.500 247.500h4v4h-4z" fill="#fff" stroke="#999"/>
<path d="M667.500 261.500h4v4h-4zM665.500 269.500h6v6h-6zM673.500 259.500h6v6h-6zM675.500 270.500h4v4h-4z" fill="#6db0e8" stroke="#1a76c2"/>
<!-- nav buttons -->
<circle cx="94" cy="318" r="8.500" fill="none" stroke="#bbb"/><path d="M99 318H90M93 314 89 318 93 322" fill="none" stroke="#bbb" stroke-width="1.500"/>
<circle cx="123" cy="318" r="8.500" fill="none" stroke="#666"/><path d="M118 318H127M124 314 128 318 124 322" fill="none" stroke="#555" stroke-width="1.500"/>
<path d="M144 316h7l-3.500 4z" fill="#666"/><path d="M170 323V312M166 316 170 312 174 316" fill="none" stroke="#666" stroke-width="1.500"/>
</svg>

<div class="bd" style="left:183px;top:307px;width:434px;height:23px;border-width:1px"></div>
<div class="ln" style="left:592px;top:308px;height:21px"></div>
<div class="bd" style="left:629px;top:307px;width:202px;height:23px;border-width:1px"></div>
<div class="t n" style="left:222px;top:310px">Alte Firefox-Daten</div>
<div class="t d" style="left:638px;top:310px">"Alte Firefox-Daten" durchsuc...</div>
<svg width="1600" height="900">
<use href="#fold" x="187" y="309" width="13" height="17"/><path d="M209 315v6l3-3z" fill="#555"/>
<path d="M579 316l3.500 4 3.500-4" fill="none" stroke="#555" stroke-width="1.500"/>
<path d="M609 314A5 5 0 1 0 609.500 321M609 310v4.500h-4" fill="none" stroke="#666" stroke-width="1.500"/>
<circle cx="818" cy="316" r="3.500" fill="none" stroke="#555" stroke-width="1.500"/><path d="M815 319 811 323" stroke="#555" stroke-width="2"/>
<path d="M363 343l4-3 4 3z" fill="#8ab6d8"/>
</svg>
<div class="a" style="left:75px;top:339px;width:768px;height:1px;background:#c4c7cb"></div>

<!-- nav pane -->
<div class="a" style="left:76px;top:349px;width:129px;height:19px;background:#f7f7f7;border:1px solid #dedede"></div>
<div class="a" style="left:75px;top:340px;width:131px;height:382px;overflow:hidden">
<div class="t n" style="left:41px;top:12px">Favoriten</div>
<div class="t n" style="left:51px;top:33px">Zuletzt besucht</div>
<div class="t n" style="left:51px;top:54px">Downloads</div>
<div class="t n" style="left:51px;top:75px">Favoriten - Verknüpfungen</div>
<div class="t n" style="left:51px;top:96px">Desktop</div>
<div class="t n" style="left:41px;top:138px">OneDrive</div>
<div class="t n" style="left:51px;top:159px">Bilder</div>
<div class="t n" style="left:51px;top:180px">Dokumente</div>
<div class="t n" style="left:41px;top:222px">Heimnetzgruppe</div>
<div class="t n" style="left:41px;top:264px">Dieser PC</div>
<div class="t n" style="left:51px;top:285px">Bilder</div>
<div class="t n" style="left:51px;top:306px">Desktop</div>
<div class="t n" style="left:51px;top:327px">Dokumente</div>
<div class="t n" style="left:51px;top:348px">Downloads</div>
<div class="t n" style="left:51px;top:369px">Musik</div>
</div>
<svg width="1600" height="900">
<defs><path id="star" d="M8 0 10 5.500H16L11 9 13 15 8 11.500 3 15 5 9 0 5.500H6Z" fill="#f7b733" stroke="#e8843a" stroke-width=".8"/></defs>
<use href="#star" x="95" y="351"/><use href="#star" x="105" y="414"/>
<rect x="106" y="373" width="14" height="8" fill="#cfd8e0" stroke="#8a96a2"/><rect x="110" y="382" width="11" height="6" fill="#dfe5ea" stroke="#8a96a2"/><circle cx="110" cy="375" r="3" fill="#eee" stroke="#666" stroke-width=".6"/>
<use href="#fold" x="106" y="393" width="13" height="17"/><path d="M116 402V407H113L117 411 121 407H118V402Z" fill="#2f8fe0"/>
<rect x="105" y="439" width="16" height="12" fill="#2a66c8" stroke="#6c7a88"/>
<path d="M95 490C97 481 104 479 108 482 112 482 115 486 112 490Z" fill="#0f5fb4"/><path d="M95 492 99 484 103 492Z" fill="#f2c820" stroke="#555" stroke-width=".4"/>
<use href="#fold" x="106" y="498" width="13" height="17"/><use href="#fold" x="106" y="519" width="13" height="17"/>
<circle cx="99" cy="571" r="4.500" fill="#3a6fc4"/><circle cx="106" cy="566" r="3.500" fill="#2c9c3c"/><circle cx="106" cy="575" r="4" fill="#2a4fa4"/>
<rect x="98" y="605" width="14" height="10" fill="#1f50c4" stroke="#889"/><rect x="94" y="609" width="3" height="10" fill="#ddd" stroke="#888" stroke-width=".5"/><path d="M100 618h12" stroke="#9aa" stroke-width="2"/>
<use href="#fold" x="106" y="624" width="13" height="17"/><rect x="112" y="629" width="8" height="7" fill="#9fd0e8" stroke="#667" stroke-width=".5"/>
<use href="#fold" x="106" y="645" width="13" height="17"/><rect x="112" y="653" width="8" height="7" fill="#1f50c4"/>
<use href="#fold" x="106" y="666" width="13" height="17"/><rect x="112" y="670" width="8" height="10" fill="#fff" stroke="#889" stroke-width=".5"/>
<use href="#fold" x="106" y="687" width="13" height="17"/><path d="M116 696V701H113L117 705 121 701H118V696Z" fill="#2f8fe0"/>
<use href="#fold" x="106" y="708" width="13" height="14"/><path d="M117 709V719" stroke="#2f8fe0" stroke-width="2"/>
</svg>
<div class="a" style="left:207px;top:340px;width:16px;height:382px;background:#f0f0f0"></div>
<div class="a" style="left:207px;top:357px;width:15px;height:269px;background:#cdcdcd"></div>
<svg width="1600" height="900">
<path d="M211 352l3.500-4 3.500 4M211 712l3.500 4 3.500-4" fill="none" stroke="#444" stroke-width="2"/>
<use href="#fold" x="245" y="373" width="13" height="17"/>
</svg>
<div class="ln" style="left:497px;top:340px;height:22px;background:#e5e5e5"></div>
<div class="ln" style="left:617px;top:340px;height:22px;background:#e5e5e5"></div>
<div class="ln" style="left:737px;top:340px;height:22px;background:#e5e5e5"></div>
<div class="ln" style="left:817px;top:340px;height:22px;background:#e5e5e5"></div>
<div class="t h" style="left:243px;top:345px">Name</div>
<div class="t h" style="left:504px;top:345px;letter-spacing:.1px">Änderungsdatum</div>
<div class="t h" style="left:624px;top:345px">Typ</div>
<div class="t h" style="left:744px;top:345px;letter-spacing:-.2px">Größe</div>
<div class="t n sn" style="left:264px;top:374px">8g7lv9c4.default-release</div>
<div class="t d dg" style="left:504px;top:374px">12.04.2023 22:08</div>
<div class="t d" style="left:624px;top:374px">Dateiordner</div>
<div class="t" style="left:89px;top:726px">1 Element</div>
<div class="ln" style="left:151px;top:724px;height:18px;background:#ececec"></div>
<div class="a" style="left:795px;top:723px;width:23px;height:21px;background:#cde6f7;border:1px solid #8ec4e8;box-sizing:border-box"></div>
<svg width="1600" height="900">
<path d="M801 729h3v2h-3zM801 733h3v2h-3zM801 737h3v2h-3z" fill="#555"/><path d="M806 730h7M806 734h7M806 738h7" stroke="#555"/>
<rect x="822" y="729" width="12" height="10" fill="#cfe0ef" stroke="#777"/>
</svg>

<svg style="left:230px;top:450px" width="560" height="140" viewBox="0 0 1568 420" preserveAspectRatio="none" fill="none" stroke="#f00" stroke-width="12.500" stroke-linejoin="round" stroke-linecap="round">
<path d="M63 240V190L72 130 85 90 110 88 122 130 125 235M68 165H120M160 105V225L175 242 188 243M226 110V210L235 240 252 252M198 153 248 155M280 150H310V195L300 215 285 205 278 200ZM300 215 318 238H338"/>
<path d="M432 97H465M433 97V155M432 172H462M432 190V240M510 130 525 145M515 180 503 190V240L518 243M550 200 558 245M558 215 565 245M575 200H590M655 165H630L622 190V235L632 253 652 250M632 200 655 190V165M770 100 735 102 722 125V185M697 206H745M720 225V310M810 180 803 200V250L815 265 835 262M810 178 835 175 845 190V225L835 250M860 142 880 145 895 175 915 225 922 245M942 158 925 185 905 215 885 240 868 247"/>
<path d="M1035 123H1055L1075 155 1080 210 1075 250 1055 268 1005 270M1042 130V258M1125 212 1115 235 1112 260 1125 272H1150M1140 200 1168 203 1155 270 1170 285M1196 92 1200 150 1210 235 1225 265 1245 270M1183 147 1233 145M1262 212 1290 208 1298 240H1270L1262 225 1258 250 1268 268 1290 272M1325 212 1328 265M1325 215 1345 212 1360 240 1365 270 1370 285M1457 113V262M1448 337 1455 352"/>
</svg>

</div></body></html>
